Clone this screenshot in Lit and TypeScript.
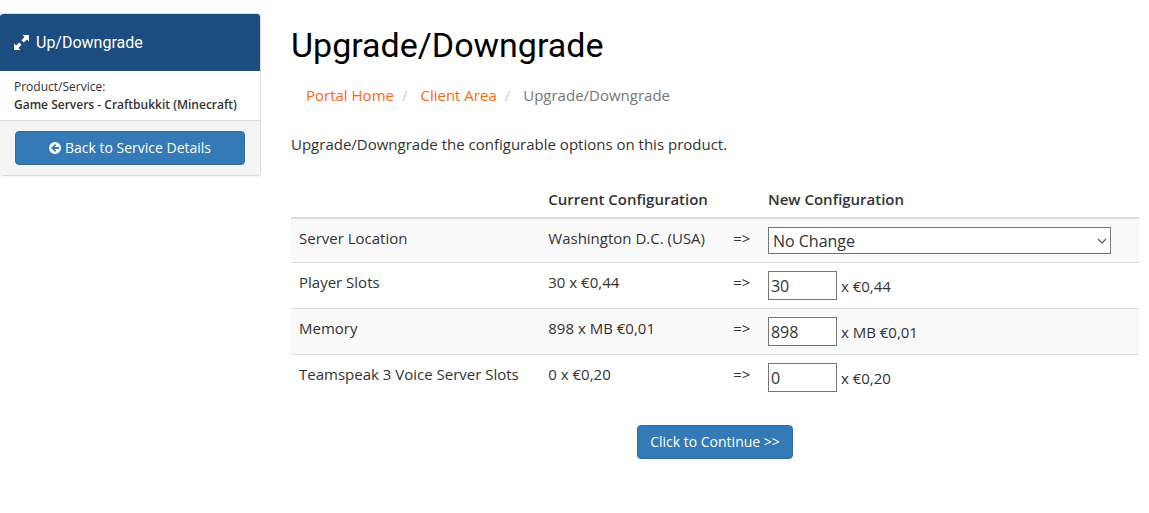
import { LitElement, html, css } from "lit";
import { customElement, property } from "lit/decorators.js";

interface QuantityOption {
  id: string;
  name: string;
  quantity: number;
  unit: string;
}

const OPTIONS: QuantityOption[] = [
  { id: "slots", name: "Player Slots", quantity: 30, unit: "€0,44" },
  { id: "memory", name: "Memory", quantity: 898, unit: "MB €0,01" },
  { id: "teamspeak", name: "Teamspeak 3 Voice Server Slots", quantity: 0, unit: "€0,20" },
];

const buttonStyles = css`
  .btn {
    display: inline-block;
    box-sizing: border-box;
    padding: 6px 12px;
    border: 1px solid #2e6da4;
    border-radius: 4px;
    background: #337ab7;
    color: #fff;
    font: 14px/20px "Open Sans", sans-serif;
    text-align: center;
    text-decoration: none;
    cursor: pointer;
  }
  .btn:hover {
    background: #286090;
  }
`;

@customElement("service-panel")
export class ServicePanel extends LitElement {
  @property() product = "";

  static styles = [
    buttonStyles,
    css`
      :host {
        display: block;
      }
      .panel {
        border: 1px solid #ddd;
        border-left: 0;
        border-radius: 4px;
        overflow: hidden;
        background: #fff;
        box-shadow: 0 1px 1px rgba(0, 0, 0, 0.05);
      }
      .heading {
        display: flex;
        align-items: center;
        gap: 7px;
        margin: 0;
        padding: 20px 14px;
        background: #1b4d80;
        color: #fff;
        font: 16px/17px Roboto, sans-serif;
      }
      .body {
        padding: 7px 14px 6px;
        font-size: 12px;
        line-height: 18px;
      }
      .product {
        font-weight: 600;
      }
      .footer {
        padding: 10px 15px;
        border-top: 1px solid #ddd;
        background: #f5f5f5;
      }
      .back {
        display: flex;
        align-items: center;
        justify-content: center;
        gap: 4px;
      }
      .icon {
        flex: none;
        fill: currentColor;
      }
    `,
  ];

  render() {
    return html`
      <aside class="panel">
        <h2 class="heading">
          <svg class="icon" width="15" height="15" viewBox="0 0 15 15" aria-hidden="true">
            <path d="M8.5 0H15V6.5L12.9 4.4L9.8 7.5L7.5 5.2L10.6 2.1Z" />
            <path d="M6.5 15H0V8.5L2.1 10.6L5.2 7.5L7.5 9.8L4.4 12.9Z" />
          </svg>
          Up/Downgrade
        </h2>
        <div class="body">
          Product/Service:<br />
          <strong class="product">${this.product}</strong>
        </div>
        <div class="footer">
          <a class="btn back" href="#details">
            <svg class="icon" width="12" height="12" viewBox="0 0 12 12" aria-hidden="true">
              <path
                fill-rule="evenodd"
                d="M6 0A6 6 0 1 1 6 12A6 6 0 1 1 6 0ZM10 5H5.4L7.2 3.2L6 2L2 6L6 10L7.2 8.8L5.4 7H10Z"
              />
            </svg>
            Back to Service Details
          </a>
        </div>
      </aside>
    `;
  }
}

@customElement("upgrade-form")
export class UpgradeForm extends LitElement {
  static styles = [
    buttonStyles,
    css`
      :host {
        display: block;
      }
      .table {
        width: 100%;
        table-layout: fixed;
        border-collapse: collapse;
      }
      .name-col {
        width: 29.4%;
      }
      .current-col {
        width: 21.8%;
      }
      .arrow-col {
        width: 4.1%;
      }
      .table th,
      .table td {
        padding: 8px;
        text-align: left;
        vertical-align: top;
      }
      .table th {
        border-bottom: 2px solid #ddd;
        font-weight: 600;
        line-height: 20px;
      }
      .table td {
        border-top: 1px solid #ddd;
        font-weight: 400;
        line-height: 22px;
      }
      .table tbody tr:nth-child(odd) {
        background: #f9f9f9;
      }
      .table .arrow {
        white-space: nowrap;
      }
      .control {
        box-sizing: border-box;
        border: 1px solid #767676;
        border-radius: 0;
        background: #fff;
        color: #333;
        font: 16px/22px "Open Sans", sans-serif;
      }
      .select-wrap {
        display: grid;
        align-items: center;
        margin-right: 20px;
      }
      .select-wrap > * {
        grid-area: 1 / 1;
      }
      .select {
        appearance: none;
        width: 100%;
        height: 27px;
        padding: 0 20px 0 4px;
      }
      .chevron {
        justify-self: end;
        margin-right: 4px;
        pointer-events: none;
      }
      .quantity {
        display: flex;
        align-items: baseline;
        gap: 4px;
      }
      .number {
        width: 69px;
        height: 29px;
        padding: 1px 2px;
      }
      .actions {
        margin-top: 25px;
        text-align: center;
      }
    `,
  ];

  render() {
    return html`
      <form @submit=${(e: Event) => e.preventDefault()}>
        <table class="table">
          <colgroup>
            <col class="name-col" />
            <col class="current-col" />
            <col class="arrow-col" />
            <col />
          </colgroup>
          <thead>
            <tr>
              <th></th>
              <th>Current Configuration</th>
              <th></th>
              <th>New Configuration</th>
            </tr>
          </thead>
          <tbody>
            <tr>
              <td><label for="location">Server Location</label></td>
              <td>Washington D.C. (USA)</td>
              <td class="arrow">=&gt;</td>
              <td>
                <div class="select-wrap">
                  <select id="location" class="control select">
                    <option>No Change</option>
                  </select>
                  <svg class="chevron" width="10" height="6" viewBox="0 0 10 6" aria-hidden="true">
                    <path d="M1 1L5 5L9 1" fill="none" stroke="#555" stroke-width="1.1" />
                  </svg>
                </div>
              </td>
            </tr>
            ${OPTIONS.map(
              (o) => html`
                <tr>
                  <td><label for=${o.id}>${o.name}</label></td>
                  <td>${o.quantity} x ${o.unit}</td>
                  <td class="arrow">=&gt;</td>
                  <td>
                    <div class="quantity">
                      <input id=${o.id} class="control number" type="text" .value=${String(o.quantity)} />
                      <span>x ${o.unit}</span>
                    </div>
                  </td>
                </tr>
              `
            )}
          </tbody>
        </table>
        <div class="actions">
          <button class="btn" type="submit">Click to Continue &gt;&gt;</button>
        </div>
      </form>
    `;
  }
}

@customElement("app-root")
export class AppRoot extends LitElement {
  static styles = css`
    :host {
      display: block;
      color: #333;
      font: 15px/21px "Open Sans", sans-serif;
    }
    .layout {
      display: grid;
      grid-template-columns: 261px minmax(0, 1fr);
      align-items: start;
      gap: 30px;
      padding: 13px 10px 13px 0;
    }
    .title {
      margin: 12px 0 20px;
      color: #000;
      font: 34px/40px Roboto, sans-serif;
    }
    .crumbs {
      display: flex;
      margin: 0 0 28px;
      padding: 0 15px;
      list-style: none;
      color: #777;
    }
    .crumbs li + li::before {
      content: "/";
      padding: 0 13px 0 8px;
      color: #ccc;
    }
    .crumbs a {
      color: #ff6610;
      text-decoration: none;
    }
    .intro {
      margin: 0 0 26px;
    }
  `;

  render() {
    return html`
      <div class="layout">
        <service-panel product="Game Servers - Craftbukkit (Minecraft)"></service-panel>
        <main>
          <h1 class="title">Upgrade/Downgrade</h1>
          <nav aria-label="Breadcrumb">
            <ol class="crumbs">
              <li><a href="#home">Portal Home</a></li>
              <li><a href="#client">Client Area</a></li>
              <li aria-current="page">Upgrade/Downgrade</li>
            </ol>
          </nav>
          <p class="intro">Upgrade/Downgrade the configurable options on this product.</p>
          <upgrade-form></upgrade-form>
        </main>
      </div>
    `;
  }
}
